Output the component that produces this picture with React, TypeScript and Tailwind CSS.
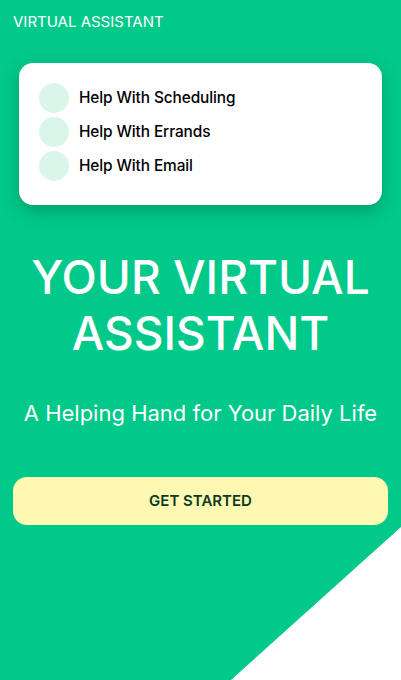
import React from "react";

const items = ["Help With Scheduling", "Help With Errands", "Help With Email"];

export default function App() {
  return (
    <div
      className="relative w-[401px] h-[680px] overflow-hidden bg-[#00c98a]"
      style={{ fontFamily: "Inter, 'Noto Sans', sans-serif" }}
    >
      <svg
        className="absolute right-0 bottom-0"
        width="170"
        height="153"
        viewBox="0 0 170 153"
      >
        <polygon points="170,0 170,153 0,153" fill="#ffffff" />
      </svg>
      <div className="relative flex flex-col">
        <div className="px-[13px] pt-[12px] text-[15px] leading-[20px] text-white">
          VIRTUAL ASSISTANT
        </div>
        <div className="mx-[19px] mt-[31px] rounded-[14px] bg-white pl-[20px] pt-[20px] pb-[24px] shadow-[0_6px_16px_rgba(0,80,50,0.35)] flex flex-col gap-[4px]">
          {items.map((t) => (
            <div key={t} className="flex items-center gap-[10px] h-[30px]">
              <div className="w-[30px] h-[30px] rounded-full bg-[#daf5ea]" />
              <span className="text-[15.4px] font-medium text-black tracking-[-0.1px]">{t}</span>
            </div>
          ))}
        </div>
        <h1 className="mt-[44px] text-center text-white text-[46px] leading-[56px] font-medium">
          YOUR VIRTUAL
          <br />
          ASSISTANT
        </h1>
        <p className="mt-[38px] text-center text-white text-[22px] leading-[28px]">
          A Helping Hand for Your Daily Life
        </p>
        <button className="mx-[13px] mt-[50px] h-[48px] rounded-[14px] bg-[#fef8b3] text-[#0c3a25] text-[15px] font-semibold">
          GET STARTED
        </button>
      </div>
    </div>
  );
}
